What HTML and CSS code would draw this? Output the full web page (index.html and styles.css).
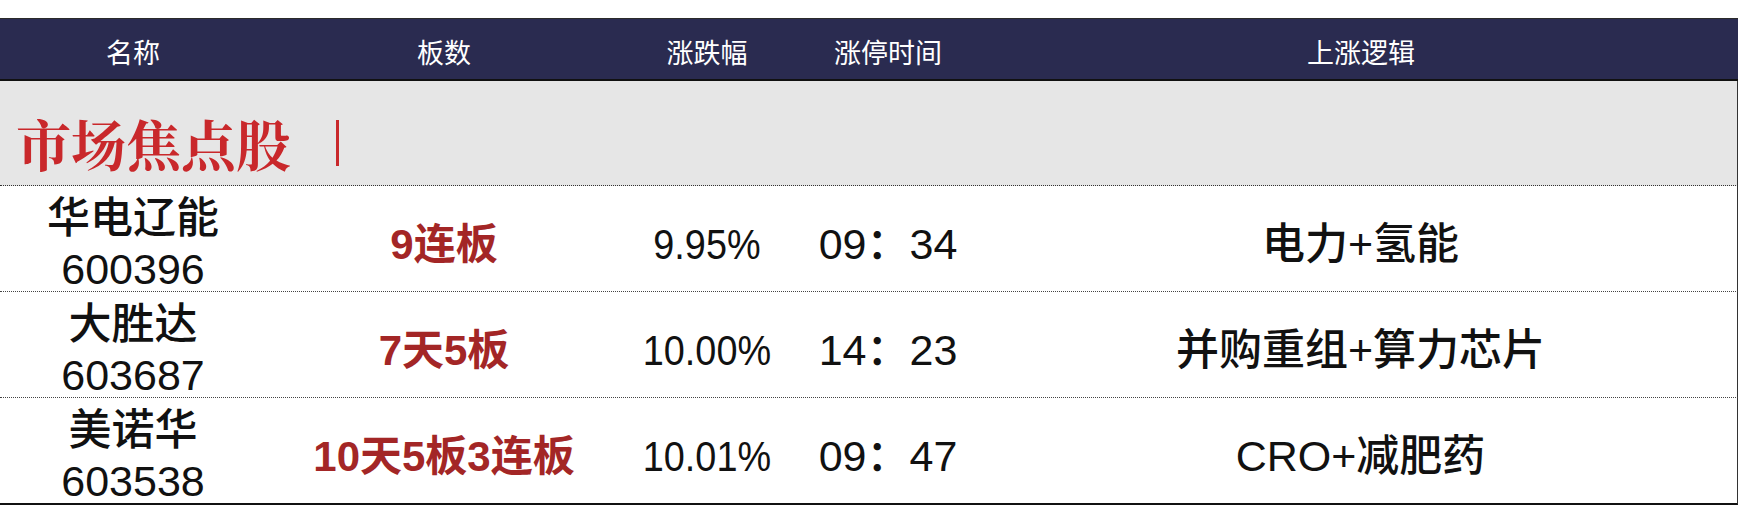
FILE: index.html
```html
<!DOCTYPE html>
<html lang="zh-CN">
<head>
<meta charset="utf-8">
<title>市场焦点股</title>
<link rel="stylesheet" href="styles.css">
</head>
<body>
<div class="sheet">
  <div class="head">
    <div>名称</div>
    <div>板数</div>
    <div>涨跌幅</div>
    <div>涨停时间</div>
    <div>上涨逻辑</div>
  </div>
  <div class="section">
    <span class="section-title">市场焦点股</span><span class="bar"></span>
  </div>
  <div class="row">
    <div class="name"><span>华电辽能</span><span>600396</span></div>
    <div class="boards">9连板</div>
    <div class="change"><span class="pct">9.95%</span></div>
    <div class="time">09：34</div>
    <div class="logic">电力+氢能</div>
  </div>
  <div class="row">
    <div class="name"><span>大胜达</span><span>603687</span></div>
    <div class="boards">7天5板</div>
    <div class="change"><span class="pct">10.00%</span></div>
    <div class="time">14：23</div>
    <div class="logic">并购重组+算力芯片</div>
  </div>
  <div class="row last">
    <div class="name"><span>美诺华</span><span>603538</span></div>
    <div class="boards">10天5板3连板</div>
    <div class="change"><span class="pct">10.01%</span></div>
    <div class="time">09：47</div>
    <div class="logic">CRO+减肥药</div>
  </div>
</div>
</body>
</html>
```
FILE: styles.css
```css
html, body {
  margin: 0;
  padding: 0;
  background: #ffffff;
}

body {
  font-family: "Liberation Sans", "Noto Sans CJK SC", sans-serif;
  color: #111111;
}

.sheet {
  width: 1738px;
  padding-top: 18px;
}

.head {
  display: grid;
  grid-template-columns: 266px 356px 170px 192px 1fr;
  align-items: center;
  height: 60px;
  background: #2a2b50;
  border-top: 1px solid #2b2b2b;
  border-bottom: 2px solid #111111;
  color: #ffffff;
  font-family: "Noto Sans CJK SC", sans-serif;
  font-size: 27px;
  text-align: center;
}

.head > div {
  padding-top: 4px;
}

.section {
  display: flex;
  align-items: center;
  height: 105px;
  box-sizing: border-box;
  padding: 20px 0 0 16px;
  background: #e6e6e6;
  border-right: 1px solid #333333;
  border-bottom: 1px dotted #333333;
}

.section-title {
  font-family: "Noto Serif CJK SC", "Source Han Serif SC", "Noto Sans CJK SC", serif;
  font-weight: 700;
  font-size: 55px;
  line-height: 56px;
  color: #c9282b;
}

.bar {
  display: inline-block;
  width: 3px;
  height: 46px;
  margin-left: 45px;
  background: #c9282b;
}

.row {
  display: grid;
  grid-template-columns: 266px 356px 170px 192px 1fr;
  grid-template-rows: 105px;
  align-items: center;
  height: 105px;
  border-right: 1px solid #333333;
  border-bottom: 1px dotted #444444;
  text-align: center;
  font-size: 43px;
  font-weight: 500;
}

.row.last {
  border-bottom: 2px solid #111111;
}

.name {
  align-self: start;
  display: flex;
  flex-direction: column;
  padding-top: 7px;
  line-height: 51px;
}

.boards {
  padding-top: 4px;
  color: #a32626;
  font-weight: 700;
  font-size: 42px;
}

.change {
  padding-top: 11px;
}

.pct {
  display: inline-block;
  transform: scaleX(0.88);
}

.time {
  padding-top: 2px;
}

.logic {
  padding-top: 2px;
}
```
